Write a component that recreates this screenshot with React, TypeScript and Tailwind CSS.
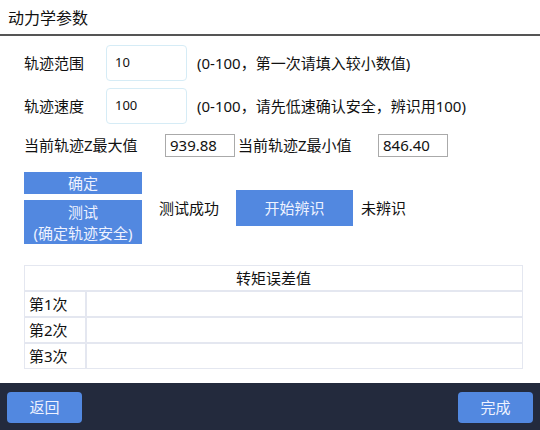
const font = "font-['Noto_Sans','Noto_Sans_CJK_SC',sans-serif]";

const rows = ["第1次", "第2次", "第3次"];

export default function App() {
  return (
    <div className={`flex h-[430px] w-[540px] flex-col bg-white text-[#111] ${font}`}>
      {/* Title */}
      <div className="flex h-[36px] items-center border-b-2 border-[#555] px-2 pt-[1px] text-[16px]">
        动力学参数
      </div>

      <div className="flex flex-1 flex-col px-6 pt-[9px]">
        {/* Range */}
        <div className="flex h-[36px] items-center">
          <span className="w-[82px] text-[15px]">轨迹范围</span>
          <div className="flex h-[36px] w-[81px] items-center rounded-[4px] border border-[#d6ecf6] px-[8px] text-[13px]">
            10
          </div>
          <span className="ml-[10px] text-[15px]">(0-100，第一次请填入较小数值)</span>
        </div>
        {/* Speed */}
        <div className="mt-[7px] flex h-[36px] items-center">
          <span className="w-[82px] text-[15px]">轨迹速度</span>
          <div className="flex h-[36px] w-[81px] items-center rounded-[4px] border border-[#d6ecf6] px-[8px] text-[13px]">
            100
          </div>
          <span className="ml-[10px] text-[15px]">(0-100，请先低速确认安全，辨识用100)</span>
        </div>
        {/* Z values */}
        <div className="mt-[10px] flex h-[23px] items-center text-[15px]">
          <span className="w-[141px]">当前轨迹Z最大值</span>
          <div className="flex h-[23px] w-[70px] items-center border border-[#aaa] px-[4px]">939.88</div>
          <span className="ml-[3px] w-[140px]">当前轨迹Z最小值</span>
          <div className="flex h-[23px] w-[70px] items-center border border-[#aaa] px-[4px]">846.40</div>
        </div>
        {/* Buttons */}
        <div className="mt-[15px] flex">
          <div className="flex w-[118px] flex-col">
            <div className="flex h-[22px] items-center justify-center bg-[#5288e0] text-[15px] text-[#eef2ff]">
              确定
            </div>
            <div className="mt-[6px] flex h-[44px] flex-col items-center justify-center bg-[#5288e0] pt-[2px] text-[15px] leading-[21px] text-[#eef2ff]">
              <span>测试</span>
              <span>(确定轨迹安全)</span>
            </div>
          </div>
          <div className="ml-[17px] mt-[18px] flex h-[36px] items-center text-[15px]">测试成功</div>
          <div className="ml-[17px] mt-[18px] flex h-[36px] w-[117px] items-center justify-center bg-[#5288e0] text-[15px] text-[#eef2ff]">
            开始辨识
          </div>
          <div className="ml-[8px] mt-[18px] flex h-[36px] items-center text-[15px]">未辨识</div>
        </div>
        {/* Table */}
        <div className="mt-[21px] w-[499px] border border-[#e4e7f0] text-[15px]">
          <div className="flex h-[24px] items-center justify-center">转矩误差值</div>
          {rows.map((r) => (
            <div key={r} className="flex h-[26px] border-t-2 border-[#e4e7f0]">
              <div className="flex w-[62px] items-center border-r-2 border-[#e4e7f0] pl-[4px]">{r}</div>
              <div className="flex-1" />
            </div>
          ))}
        </div>
      </div>

      {/* Footer */}
      <div className="flex h-[47px] items-center justify-between bg-[#232a3d] px-[7px] pt-[2px]">
        <button className="flex h-[31px] w-[75px] items-center justify-center rounded-[4px] bg-[#5288e0] text-[15px] text-[#eef2ff]">
          返回
        </button>
        <button className="flex h-[31px] w-[75px] items-center justify-center rounded-[4px] bg-[#5288e0] text-[15px] text-[#eef2ff]">
          完成
        </button>
      </div>
    </div>
  );
}
